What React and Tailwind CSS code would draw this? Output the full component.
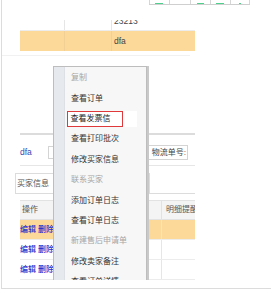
import React from 'react';

const font = { fontFamily: '"Liberation Sans", "Noto Sans CJK SC", sans-serif' };

const menuItems = [
    { label: '复制', disabled: true },
    { label: '查看订单' },
    { label: '查看发票信', marked: true },
    { label: '查看打印批次' },
    { label: '修改买家信息' },
    { label: '联系买家', disabled: true },
    { label: '添加订单日志' },
    { label: '查看订单日志' },
    { label: '新建售后申请单', disabled: true },
    { label: '修改卖家备注' },
    { label: '查看订单详情' },
];

const ContextMenu = () => (
    <div className="absolute left-[51px] top-[66px] w-[96px] h-[260px] flex">
        <div className="w-[94px] h-full border border-[#bdbdbd] bg-[#f7f7f7] flex">
            <div className="w-[11px] h-full bg-[#e6e9ee] border-r border-[#dde1e6]" />
            <div className="flex-1 pt-[1px]">
                {menuItems.map((item) => (
                    <div key={item.label} className="h-[20.4px] flex items-center">
                        {item.marked ? (
                            <div className="ml-[2px] w-[70px] h-[16px] bg-white flex">
                                <div className="w-[56px] h-[16px] border-[1.5px] border-[#e0393b] pl-[2.5px] flex items-center text-[8px] text-[#222]">
                                    {item.label}
                                </div>
                            </div>
                        ) : (
                            <span className={`pl-[6px] text-[8px] ${item.disabled ? 'text-[#a5a5a5]' : 'text-[#333]'}`}>
                                {item.label}
                            </span>
                        )}
                    </div>
                ))}
            </div>
        </div>
        <div className="w-[2px] h-full bg-[#c9c9c9]" />
    </div>
);

const TopStrip = () => (
    <div className="ml-[147px] flex h-[5px] w-fit border-b border-[#cfcfcf]">
        <div className="w-[20px] border-l border-[#d6d6d6] flex items-end pl-[5px]">
            <div className="w-[8px] h-[1px] bg-[#4fd08c]" />
        </div>
        <div className="w-[21px] border-l border-[#d6d6d6]" />
        <div className="w-[20px] border-l border-[#d6d6d6] flex items-end pl-[6px]">
            <div className="w-[7px] h-[1px] bg-[#4fd08c]" />
        </div>
        <div className="w-[20px] border-l border-[#d6d6d6] flex items-end pl-[5px]">
            <div className="w-[8px] h-[1px] bg-[#4fd08c]" />
        </div>
        <div className="w-[20px] border-l border-r border-[#d6d6d6] flex items-end pl-[8px]">
            <div className="w-[2px] h-[1px] bg-[#4fd08c]" />
        </div>
    </div>
);

const OrdersTable = () => (
    <div className="ml-[18px] mt-[15px] w-[175px] h-[31px] overflow-hidden text-[8.5px] text-[#444]">
        <div className="-mt-[8px] h-[19px] flex border-b border-[#ececec]">
            <div className="w-[45px] border-r border-[#e6e6e6]" />
            <div className="w-[47px] border-r border-[#e6e6e6]" />
            <div className="flex-1 pl-[2px] flex items-center">23213</div>
        </div>
        <div className="h-[20px] flex bg-[#fcd899]">
            <div className="w-[45px] border-r border-[#f2cf95]" />
            <div className="w-[47px] border-r border-[#f2cf95]" />
            <div className="flex-1 pl-[2px] flex items-center">dfa</div>
        </div>
    </div>
);

const DetailRows = () => (
    <div className="ml-[18px] w-[175px] text-[8px]">
        <div className="h-[20px] flex bg-[#f4f4f4] border-t border-b border-[#e2e2e2] text-[#555]">
            <div className="w-[33px] pl-[2px] flex items-center">操作</div>
            <div className="w-[109px] border-r border-[#e2e2e2]" />
            <div className="flex-1 pl-[4px] flex items-center whitespace-nowrap overflow-hidden">明细提醒</div>
        </div>
        {['bg-[#fcd899]', 'bg-white', 'bg-white'].map((bg, i) => (
            <div key={i} className={`h-[20px] flex border-b border-[#ececec] ${bg}`}>
                <div className="w-[33px] flex items-center gap-[2px] text-[#1f2fcc] font-medium whitespace-nowrap overflow-hidden">
                    <span>编辑</span>
                    <span>删除</span>
                </div>
                <div className="w-[109px] border-r border-[#e6e6e6]" />
                <div className="flex-1" />
            </div>
        ))}
    </div>
);

export default function App() {
    return (
        <div className="w-[271px] h-[300px] bg-white overflow-hidden" style={font}>
            <div className="ml-px h-[289px] border-l border-b border-[#dcdcdc]">
                <div className="relative h-[280px] overflow-hidden">
                    <TopStrip />
                    <OrdersTable />
                    <div className="mt-[4px] w-[188px] h-px bg-[#f1f1f1]" />

                    <div className="mt-[77px] ml-[18px] w-[175px] h-[2px] bg-[#dcdcdc]" />
                    <div className="mt-[10px] ml-[18px] w-[175px] h-[15px] flex items-center text-[8.5px]">
                        <span className="w-[28px] text-[#3a45b0]">dfa</span>
                        <div className="w-[84px] h-[13px] border border-[#d4d4d4]" />
                        <div className="ml-[2px] w-[54px] h-[15px] border border-[#d4d4d4] flex items-center justify-end pr-[1px] text-[8px] text-[#444] whitespace-nowrap">
                            物流单号:
                        </div>
                    </div>
                    <div className="mt-[5px] ml-[18px] w-[175px] h-px bg-[#e6e6e6]" />

                    <div className="mt-[7px] ml-[13px] w-[135px] h-[20px] border-t border-l border-r border-[#dcdcdc] flex items-center pl-[1px] text-[8px] text-[#555]">
                        买家信息
                    </div>
                    <div className="ml-[13px] w-[180px] h-px bg-[#dcdcdc]" />

                    <div className="mt-[6px]">
                        <DetailRows />
                    </div>

                    <ContextMenu />
                </div>
            </div>
        </div>
    );
}
